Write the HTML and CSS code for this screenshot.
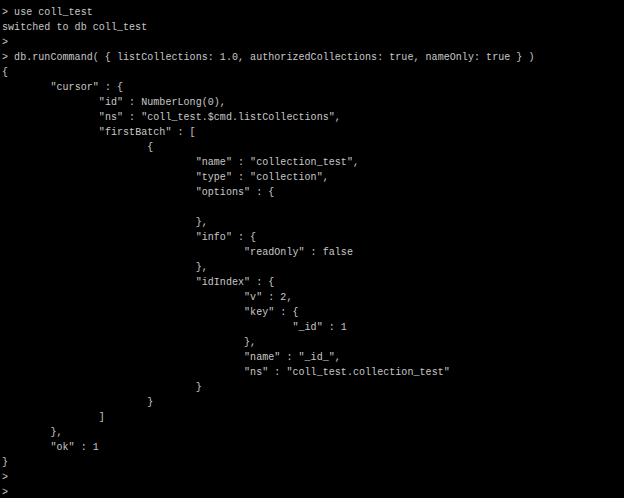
FILE: index.html
```html
<!DOCTYPE html>
<html>
<head>
<meta charset="utf-8">
<link rel="stylesheet" href="styles.css">
</head>
<body>
<pre class="console">&gt; use coll_test
switched to db coll_test
&gt;
&gt; db.runCommand( { listCollections: 1.0, authorizedCollections: true, nameOnly: true } )
{
	"cursor" : {
		"id" : NumberLong(0),
		"ns" : "coll_test.$cmd.listCollections",
		"firstBatch" : [
			{
				"name" : "collection_test",
				"type" : "collection",
				"options" : {

				},
				"info" : {
					"readOnly" : false
				},
				"idIndex" : {
					"v" : 2,
					"key" : {
						"_id" : 1
					},
					"name" : "_id_",
					"ns" : "coll_test.collection_test"
				}
			}
		]
	},
	"ok" : 1
}
&gt;
&gt;</pre>
</body>
</html>
```
FILE: styles.css
```css
html, body {
  margin: 0;
  padding: 0;
  background: #000;
  width: 624px;
  height: 498px;
  overflow: hidden;
}
.console {
  margin: 0;
  padding: 5px 0 0 2px;
  font-family: "Liberation Mono", "Courier New", monospace;
  font-size: 10px;
  letter-spacing: 0.05px;
  line-height: 15px;
  color: #c8c8c8;
  tab-size: 8;
  -moz-tab-size: 8;
  white-space: pre;
}
```
